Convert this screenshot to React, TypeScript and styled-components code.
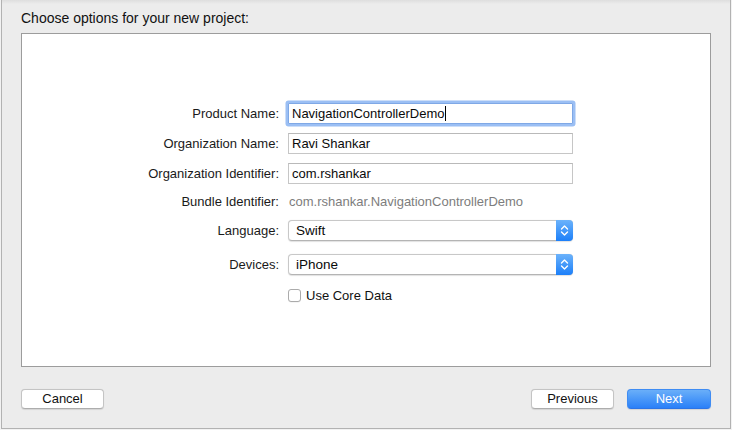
import React from 'react';
import styled, { createGlobalStyle } from 'styled-components';

const GlobalStyle = createGlobalStyle`
  html, body {
    margin: 0;
    padding: 0;
    background: #f2f2f2;
  }
  body {
    font-family: 'Liberation Sans', Arial, Helvetica, sans-serif;
    -webkit-font-smoothing: antialiased;
  }
`;

const Screen = styled.div`
  width: 732px;
  height: 430px;
  overflow: hidden;
`;

const Sheet = styled.div`
  margin-left: 1px;
  width: 728px;
  height: 428px;
  display: flex;
  flex-direction: column;
  background: linear-gradient(#dedede 0, #ececec 4px);
  border: 1px solid #b2b2b2;
  border-top: none;
`;

const Heading = styled.div`
  padding: 10px 0 0 19px;
  height: 17px;
  font-size: 14px;
  line-height: 17px;
  color: #111;
`;

const Panel = styled.div`
  margin: 6px 19px 0;
  height: 263px;
  padding-top: 69px;
  background: #ffffff;
  border: 1px solid #9c9c9c;
  display: flex;
  flex-direction: column;
`;

const FormRow = styled.div<{ $top?: number; $height: number }>`
  display: flex;
  align-items: center;
  height: ${p => p.$height}px;
  margin-top: ${p => p.$top ?? 0}px;
  gap: 9px;
`;

const Label = styled.div`
  width: 257px;
  flex: none;
  text-align: right;
  font-size: 13px;
  line-height: 15px;
  color: #1a1a1a;
`;

const TextField = styled.div<{ $focused?: boolean }>`
  box-sizing: border-box;
  width: 285px;
  height: 21px;
  padding: 0 3px;
  display: flex;
  align-items: center;
  font-size: 13px;
  color: #0a0a0a;
  background: #fff;
  border: 1px solid ${p => (p.$focused ? '#7fa8e6' : '#c6c6c6')};
  border-top-color: ${p => (p.$focused ? '#7fa8e6' : '#b9b9b9')};
  box-shadow: ${p => (p.$focused ? '0 0 0 2.5px rgba(122, 170, 240, 0.75)' : 'none')};
  border-radius: ${p => (p.$focused ? '1px' : '0')};
`;

const Caret = styled.span`
  display: inline-block;
  width: 1px;
  height: 15px;
  background: #000;
  margin-left: 1px;
`;

const StaticValue = styled.div`
  padding-left: 1px;
  font-size: 13px;
  color: #7d7d7d;
`;

const Popup = styled.div`
  box-sizing: border-box;
  width: 285px;
  height: 21px;
  display: flex;
  align-items: stretch;
  background: #fff;
  border: 1px solid #c8c8c8;
  border-bottom-color: #b4b4b4;
  border-radius: 4px;
  box-shadow: 0 0.5px 1px rgba(0, 0, 0, 0.12);
`;

const PopupValue = styled.div`
  flex: 1;
  display: flex;
  align-items: center;
  padding-left: 7px;
  font-size: 13.5px;
  color: #0a0a0a;
`;

const Stepper = styled.div`
  width: 17px;
  margin: -1px -1px -1px 0;
  border-radius: 0 4px 4px 0;
  background: linear-gradient(#6cb3fb, #1c7ff9);
  display: flex;
  align-items: center;
  justify-content: center;
`;

const CheckRow = styled.label`
  display: flex;
  align-items: center;
  gap: 5px;
  font-size: 13px;
  color: #111;
`;

const CheckBox = styled.span`
  box-sizing: border-box;
  width: 13px;
  height: 13px;
  background: #fff;
  border: 1px solid #ababab;
  border-radius: 3px;
  box-shadow: 0 0.5px 0.5px rgba(0, 0, 0, 0.08);
`;

const Footer = styled.div`
  display: flex;
  align-items: center;
  margin-top: 22px;
  padding: 0 19px;
  gap: 13px;
`;

const Button = styled.button<{ $primary?: boolean; $push?: boolean; $width: number }>`
  box-sizing: border-box;
  width: ${p => p.$width}px;
  height: 20px;
  margin-left: ${p => (p.$push ? 'auto' : '0')};
  padding: 0;
  font-family: 'Liberation Sans', Arial, Helvetica, sans-serif;
  font-size: 13px;
  line-height: 18px;
  border-radius: 4px;
  color: ${p => (p.$primary ? '#ffffff' : '#111')};
  background: ${p => (p.$primary ? 'linear-gradient(#6aaff9, #2a80f8)' : '#ffffff')};
  border: 1px solid ${p => (p.$primary ? '#3f8cf3' : '#c4c4c4')};
  border-bottom-color: ${p => (p.$primary ? '#2c74e6' : '#adadad')};
  box-shadow: 0 0.5px 1px rgba(0, 0, 0, 0.1);
`;

const StepperIcon = () => (
  <svg width="9" height="13" viewBox="0 0 9 13">
    <path d="M1.5 5 L4.5 2 L7.5 5" fill="none" stroke="#fff" strokeWidth="1.4" strokeLinecap="round" strokeLinejoin="round" />
    <path d="M1.5 8 L4.5 11 L7.5 8" fill="none" stroke="#fff" strokeWidth="1.4" strokeLinecap="round" strokeLinejoin="round" />
  </svg>
);

export default function App() {
  return (
    <>
      <GlobalStyle />
      <Screen>
        <Sheet>
          <Heading>Choose options for your new project:</Heading>
          <Panel>
            <FormRow $height={21}>
              <Label>Product Name:</Label>
              <TextField $focused>
                NavigationControllerDemo
                <Caret />
              </TextField>
            </FormRow>
            <FormRow $height={21} $top={9}>
              <Label>Organization Name:</Label>
              <TextField>Ravi Shankar</TextField>
            </FormRow>
            <FormRow $height={21} $top={9}>
              <Label>Organization Identifier:</Label>
              <TextField>com.rshankar</TextField>
            </FormRow>
            <FormRow $height={17} $top={9}>
              <Label>Bundle Identifier:</Label>
              <StaticValue>com.rshankar.NavigationControllerDemo</StaticValue>
            </FormRow>
            <FormRow $height={21} $top={10}>
              <Label>Language:</Label>
              <Popup>
                <PopupValue>Swift</PopupValue>
                <Stepper>
                  <StepperIcon />
                </Stepper>
              </Popup>
            </FormRow>
            <FormRow $height={21} $top={13}>
              <Label>Devices:</Label>
              <Popup>
                <PopupValue>iPhone</PopupValue>
                <Stepper>
                  <StepperIcon />
                </Stepper>
              </Popup>
            </FormRow>
            <FormRow $height={13} $top={14}>
              <Label />
              <CheckRow>
                <CheckBox />
                Use Core Data
              </CheckRow>
            </FormRow>
          </Panel>
          <Footer>
            <Button $width={83}>Cancel</Button>
            <Button $width={83} $push>Previous</Button>
            <Button $width={84} $primary>Next</Button>
          </Footer>
        </Sheet>
      </Screen>
    </>
  );
}
